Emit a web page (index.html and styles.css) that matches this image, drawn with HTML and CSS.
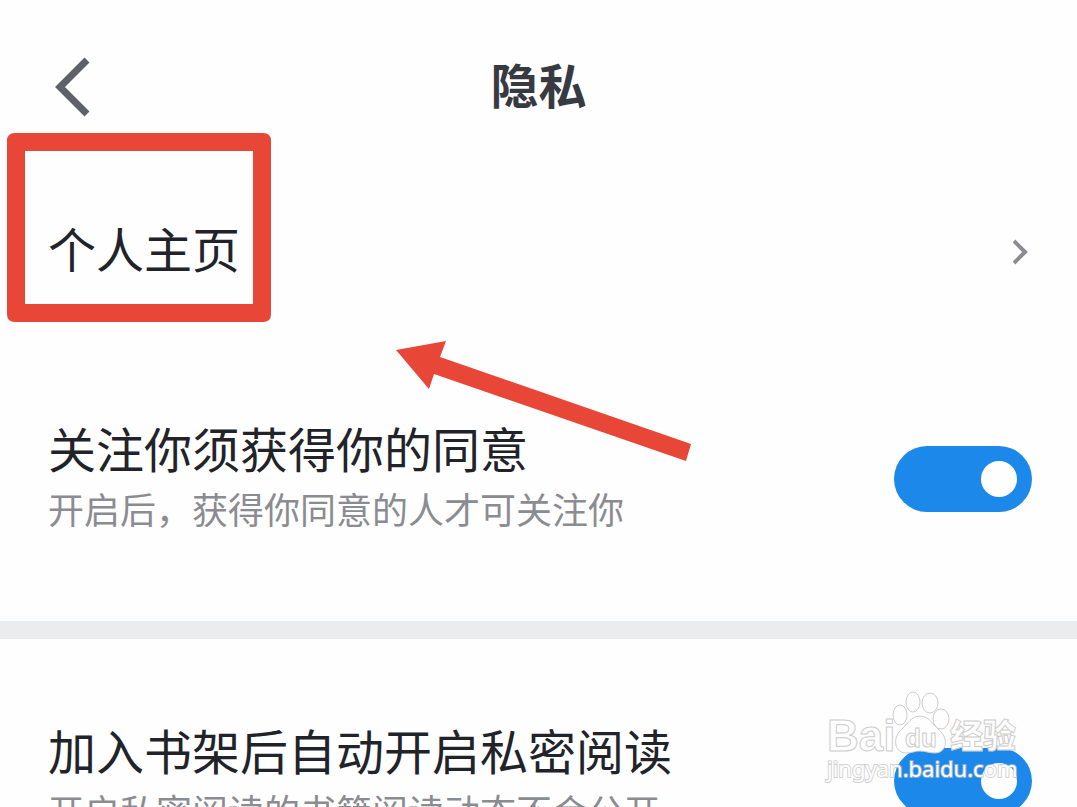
FILE: index.html
```html
<!DOCTYPE html>
<html lang="zh-CN">
<head>
    <meta charset="UTF-8">
    <meta name="viewport" content="width=device-width, initial-scale=1.0">
    <title>隐私</title>
    <link rel="stylesheet" href="styles.css">
</head>
<body>
    <header class="header">
        <button class="btn-back" type="button" aria-label="返回">
            <svg width="36" height="60" viewBox="0 0 36 60">
                <path d="M33 3 L6 30 L33 57" fill="none" stroke="#5f6169" stroke-width="7"/>
            </svg>
        </button>
        <h1 class="title">隐私</h1>
    </header>

    <main>
        <a class="row row-link" href="#">
            <span class="row-title">个人主页</span>
            <svg width="16" height="28" viewBox="0 0 16 28">
                <path d="M1 4 L12 15 L1 26" fill="none" stroke="#8b8c91" stroke-width="4"/>
            </svg>
        </a>

        <div class="row row-setting">
            <label class="row-text" for="follow">
                <span class="row-title">关注你须获得你的同意</span>
                <span class="row-desc">开启后，获得你同意的人才可关注你</span>
            </label>
            <input class="switch" type="checkbox" id="follow" checked>
        </div>

        <div class="divider"></div>

        <div class="row row-setting">
            <label class="row-text" for="shelf">
                <span class="row-title">加入书架后自动开启私密阅读</span>
                <span class="row-desc">开启私密阅读的书籍阅读动态不会公开</span>
            </label>
            <input class="switch" type="checkbox" id="shelf" checked>
        </div>
    </main>

    <!-- recuadro y flecha -->
    <svg class="marks" width="700" height="470" viewBox="0 0 700 470">
        <path d="M15 133 H263 Q271 133 271 141 V314 Q271 322 263 322 H15 Q7 322 7 314 V141 Q7 133 15 133 Z M25 151 V304 H253 V151 Z" fill="#e84636" fill-rule="evenodd"/>
        <path d="M396 350 L446 341 L440 357 L691 444 L686 461 L434 374 L429 389 Z" fill="#e84636"/>
    </svg>

    <svg class="watermark" width="200" height="100" viewBox="0 0 200 100">
        <g class="wm-logo">
            <text class="wm-bai" x="7" y="65">Bai</text>
            <ellipse cx="80" cy="29" rx="7" ry="10"/>
            <ellipse cx="93" cy="16" rx="7" ry="10"/>
            <ellipse cx="110" cy="17" rx="8" ry="10"/>
            <ellipse cx="121" cy="33" rx="8" ry="10"/>
            <path d="M100 30 C91 30 88 38 82 43 C72 51 74 67 86 67 C92 67 95 65 100 65 C105 65 109 67 115 67 C127 67 129 52 119 44 C112 38 109 30 100 30 Z"/>
            <text class="wm-du" x="85" y="61">du</text>
            <text class="wm-cn" x="130" y="62">经验</text>
        </g>
        <text class="wm-url" x="7" y="91">jingyan.baidu.com</text>
    </svg>
</body>
</html>
```
FILE: styles.css
```css
* {
    box-sizing: border-box;
}

body {
    position: relative;
    margin: 0;
    height: 100vh;
    overflow: hidden;
    background: #fefefe;
    color: #222329;
    font-family: "Noto Sans CJK SC", sans-serif;
}

.header {
    display: grid;
    grid-template-columns: 1fr auto 1fr;
    align-items: center;
    height: 174px;
    padding: 0 48px;
}

.btn-back {
    display: flex;
    justify-self: start;
    padding: 0 6px;
    border: none;
    background: none;
    cursor: pointer;
}

.title {
    margin: 0;
    padding-bottom: 8px;
    font-size: 48px;
    line-height: 66px;
    font-weight: 700;
    color: #383a42;
}

.row {
    display: flex;
    align-items: center;
    justify-content: space-between;
    padding: 77px 45px 77px 48px;
}

.row-link {
    margin-bottom: 9px;
    padding: 40px 48px;
    color: inherit;
    text-decoration: none;
}

.row-link .row-title,
.row-text {
    padding-bottom: 8px;
}

.row-text {
    display: flex;
    flex-direction: column;
}

.row-title {
    font-size: 48px;
    line-height: 66px;
}

.row-desc {
    font-size: 36px;
    line-height: 56px;
    color: #8b8c91;
}

.switch {
    appearance: none;
    display: flex;
    align-items: center;
    flex-shrink: 0;
    width: 138px;
    height: 66px;
    margin: 0;
    padding: 0 15px;
    border-radius: 33px;
    background: #c8c9cc;
    cursor: pointer;
}

.switch::before {
    content: "";
    width: 36px;
    height: 36px;
    border-radius: 50%;
    background: #fefefe;
}

.switch:checked {
    justify-content: flex-end;
    background: #1c88ea;
}

.divider {
    height: 18px;
    background: #ebecee;
}

.marks {
    position: absolute;
    top: 0;
    left: 0;
    pointer-events: none;
}

.watermark {
    position: absolute;
    right: 57px;
    bottom: 21px;
    pointer-events: none;
}

.wm-logo {
    fill: #fefefe;
    stroke: #cdcdcd;
    stroke-width: 1;
}

.wm-bai {
    font-family: "Liberation Sans", sans-serif;
    font-size: 44px;
    font-weight: 700;
}

.wm-du {
    font-family: "Liberation Sans", sans-serif;
    font-size: 26px;
    font-weight: 700;
}

.wm-cn {
    font-size: 33px;
    font-weight: 900;
}

.wm-url {
    font-family: "Noto Sans", sans-serif;
    font-size: 22px;
    fill: #fefefe;
    stroke: rgba(190, 190, 190, 0.7);
    stroke-width: 2;
    paint-order: stroke;
}
```
